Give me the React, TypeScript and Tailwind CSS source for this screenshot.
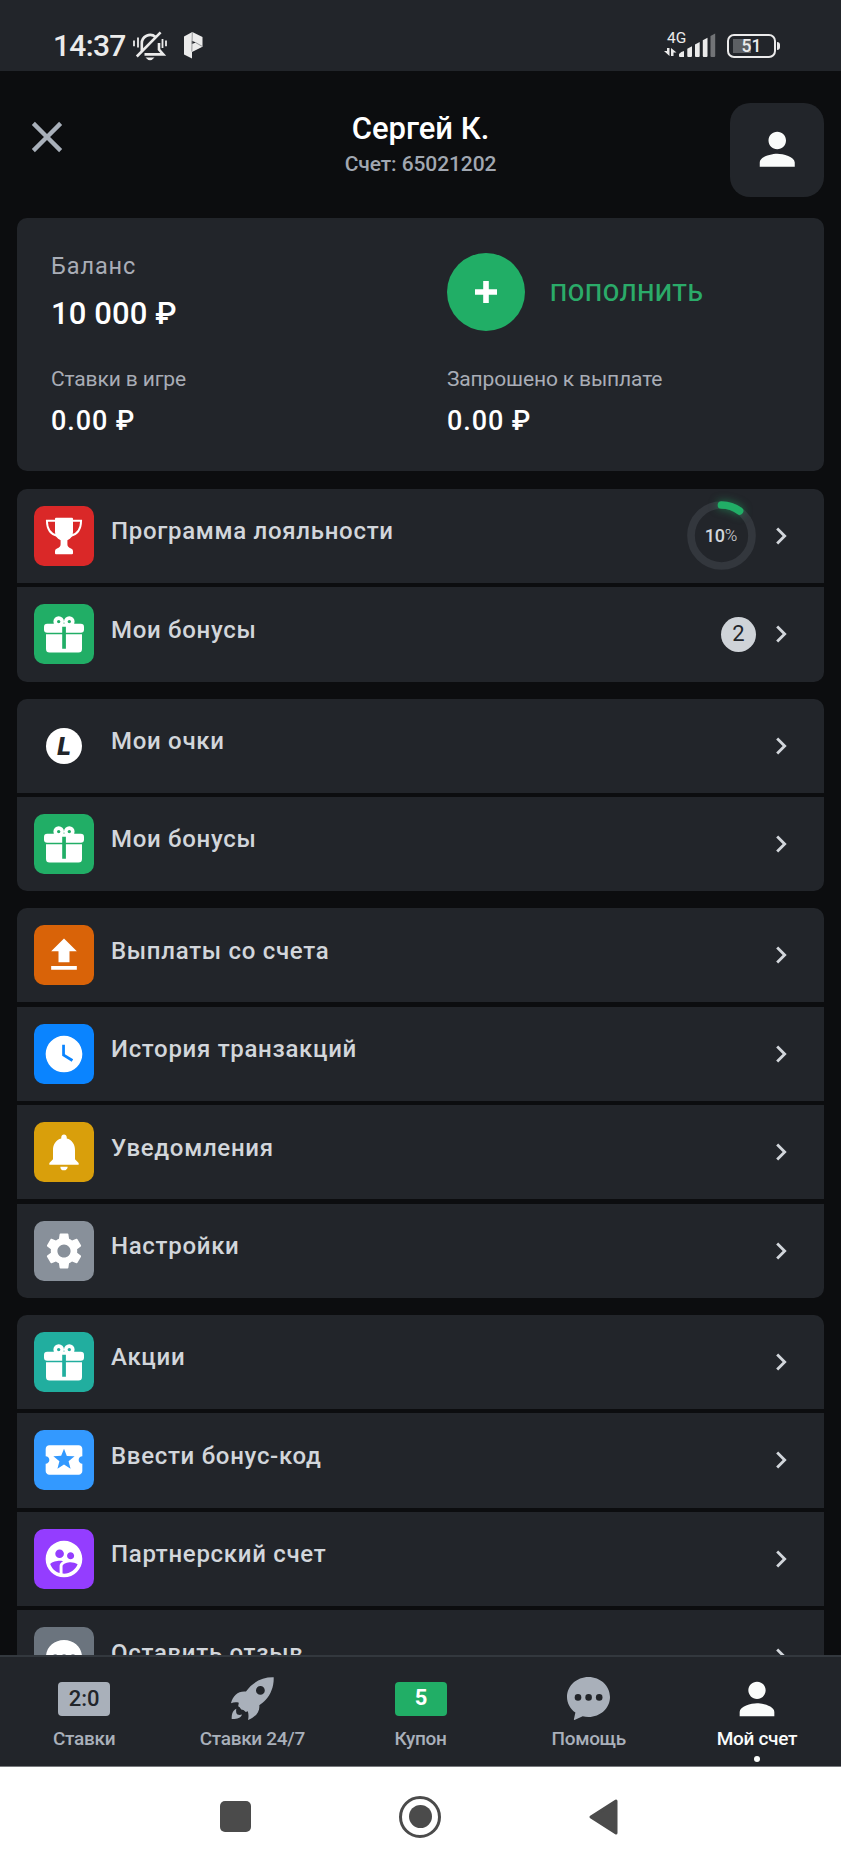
import React from "react";
import {
  MdChevronRight,
  MdClose,
  MdFileUpload,
  MdLocalActivity,
  MdNotifications,
  MdPerson,
  MdSettings,
  MdSupervisedUserCircle,
  MdWatchLater,
} from "react-icons/md";
import { clsx } from "clsx";

type MenuItem = {
  label: string;
  tile: string;
  icon: React.ReactNode;
  extra?: React.ReactNode;
};

const TrophyIcon = () => (
  <svg viewBox="0 0 60 60" className="size-[60px]" fill="#fff">
    <path d="M22 11.7h16q1 0 1 1V26q0 5.5-5.6 8.3v4q0 3 3.6 4.2 2 .8 2 2.500V47.200q0 1-1 1H22q-1 0-1-1V45q0-1.700 2-2.500 3.600-1.200 3.600-4.200v-4Q21 31.500 21 26V12.700q0-1 1-1Z" />
    <path
      d="M21.500 14.800H12.900C13 23 16.500 28.500 23.500 30M38.500 14.800h8.600C47 23 43.500 28.500 36.500 30"
      fill="none"
      stroke="#fff"
      strokeWidth="1.900"
    />
  </svg>
);

const GiftIcon = () => (
  <svg viewBox="0 0 60 60" className="size-[60px]">
    <g fill="none" stroke="#fff" strokeWidth="3.600">
      <circle cx="24.700" cy="17.600" r="3.500" />
      <circle cx="35.300" cy="17.600" r="3.500" />
    </g>
    <path
      fill="#fff"
      fillRule="evenodd"
      d="M13.200 19.700h33.600q3.200 0 3.200 3.200v2.600q0 3.200-3.200 3.200H31.900v-6h-3.700v6h-15Q10 28.700 10 25.500v-2.600q0-3.200 3.200-3.200ZM12 30.200h16.200v14.500h3.700V30.200H48V45q0 3.500-3.500 3.500h-29Q12 48.500 12 45Z"
    />
  </svg>
);

const PointsIcon = () => (
  <span className="flex size-9 items-center justify-center rounded-full bg-white text-[26px] leading-none font-black text-[#22252a] italic">
    L
  </span>
);

const ChatIcon = ({ className, dots }: { className?: string; dots: string }) => (
  <svg viewBox="0 0 43 43" className={className}>
    <path
      fill="currentColor"
      d="M21.500 0C33.400 0 43 8.900 43 20S33.400 40 21.500 40q-3 0-5.800-.8L7.500 42.900q-.8.200-.6-.6L8.400 35.600C3.300 32 0 26.300 0 20 0 8.900 9.600 0 21.500 0Z"
    />
    <g fill={dots}>
      <circle cx="11" cy="20.400" r="3.300" />
      <circle cx="21.600" cy="20.400" r="3.300" />
      <circle cx="32.200" cy="20.400" r="3.300" />
    </g>
  </svg>
);

const RocketIcon = () => (
  <svg viewBox="0 0 43 43" className="size-[43px]" fill="currentColor">
    <path
      fillRule="evenodd"
      d="M42.700.3C43 9 40 17 35 22.500 32.700 25 30.500 26.500 28.300 28.300c.8 6.200-4 12.200-11.300 14.700.8-3 .6-6-.2-8.700l-2 .7-2.300-2-2.300-.6-1.500-2.200-1.500-1 .6-3.400C5.500 25 2.500 25.200 0 26.300 1.700 18.500 7.500 13.600 15 14.500 22 4.500 32 0 42.700.3ZM29.400 9a4.400 4.400 0 1 0 0 8.800 4.400 4.400 0 0 0 0-8.800Z"
    />
    <path d="M5.300 31.700C1.500 33.500.7 37 .7 42c5 .2 9-.7 10.300-4.500-2.700 1-5.200.2-5.700-1.800-.3-1.400-.3-2.600 0-4Z" />
  </svg>
);

const LoyaltyRing = () => (
  <div className="relative flex size-[69px] items-center justify-center">
    <svg viewBox="0 0 69 69" className="absolute inset-0 overflow-visible" fill="none" strokeWidth="7.700">
      <circle cx="34.500" cy="34.500" r="30.500" stroke="#33373d" />
      <path
        d="M34.500 4a30.500 30.500 0 0 1 18 5.900"
        stroke="#21ae66"
        strokeLinecap="round"
        className="drop-shadow-[0_0_4px_#21ae6699]"
      />
    </svg>
    <span className="flex items-start pr-px text-[18px] leading-[22px] font-medium tracking-[-0.2px] text-[#d2d6db]">
      10
      <span className="-mt-px text-[17px] font-light">%</span>
    </span>
  </div>
);

const CountBadge = ({ value }: { value: number }) => (
  <span className="flex size-[35px] items-center justify-center rounded-full bg-[#cfd3d8] pb-px text-[22px] leading-none text-[#22252a]">
    {value}
  </span>
);

const glyph = "size-11 text-white";

const groups: MenuItem[][] = [
  [
    { label: "Программа лояльности", tile: "bg-[#da2828]", icon: <TrophyIcon />, extra: <LoyaltyRing /> },
    { label: "Мои бонусы", tile: "bg-[#21ae66]", icon: <GiftIcon />, extra: <CountBadge value={2} /> },
  ],
  [
    { label: "Мои очки", tile: "", icon: <PointsIcon /> },
    { label: "Мои бонусы", tile: "bg-[#21ae66]", icon: <GiftIcon /> },
  ],
  [
    { label: "Выплаты со счета", tile: "bg-[#d96308]", icon: <MdFileUpload className={glyph} /> },
    { label: "История транзакций", tile: "bg-[#0a84ff]", icon: <MdWatchLater className={glyph} /> },
    { label: "Уведомления", tile: "bg-[#d99f0b]", icon: <MdNotifications className={glyph} /> },
    { label: "Настройки", tile: "bg-[#88909a]", icon: <MdSettings className={glyph} /> },
  ],
  [
    { label: "Акции", tile: "bg-[#21ae9f]", icon: <GiftIcon /> },
    { label: "Ввести бонус-код", tile: "bg-[#3399ff]", icon: <MdLocalActivity className={glyph} /> },
    { label: "Партнерский счет", tile: "bg-[#943dff]", icon: <MdSupervisedUserCircle className={glyph} /> },
    {
      label: "Оставить отзыв",
      tile: "bg-[#6b747e]",
      icon: <ChatIcon className="mt-0.5 size-9 text-white" dots="#6b747e" />,
    },
  ],
];

const StatusBar = () => (
  <div className="flex h-[70.500px] shrink-0 items-start bg-[#22252a] pt-[28px] pl-[53px] text-[#ebebeb]">
    <span className="w-[80px] text-[30px] leading-9 font-medium tracking-[-0.7px]">14:37</span>
    <svg viewBox="0 0 34 30" className="mt-[3px] h-[30px] w-[34px]" fill="none" stroke="currentColor" strokeWidth="2.600">
      <path d="M8.800 20V12.500a8.400 8.400 0 0 1 13.800-6.600M11.500 23.400H30.300L26 18.600V12M3.800 25.500 27.600 1.300" />
      <path d="M1 9.500v5.800M5 6.500v10M29.500 8v9M33 9.500v5.800" strokeWidth="1.800" />
      <path d="M12.500 26.600h9q-4.500 5.400-9 0Z" fill="currentColor" stroke="none" />
    </svg>
    <svg viewBox="0 0 19 27" className="mt-1 ml-[17px] h-[27px] w-[19px]" fill="currentColor">
      <path d="M0 4.500 8.300 0 18.500 5v9.700L8 20v6.400L0 22.500Z" />
      <path d="M7.800 8.800 12 10.500 7.800 12Z" fill="#22252a" />
      <path d="M8.300 0 7.800 19.500M11.500 10.500l7 4" fill="none" stroke="#8b8d90" strokeWidth=".9" />
    </svg>
    <div className="mt-[3px] ml-[461px] w-[54px]">
      <div className="pl-[3px] text-[15.500px] leading-[14px]">4G</div>
      <svg viewBox="0 0 54 30" className="-mt-[15px] h-[30px] w-[54px]" fill="currentColor">
        <path d="M3 18h2.500v8L0 21h3ZM7 18l5.500 4.500H9.500V26H7Z" />
        <path d="M15 24q2-2.500 5-3v6h-4q-1 0-1-1ZM23.300 18.800l4.700-2.600V26q0 1-1 1h-2.700q-1 0-1-1ZM31 14.500l4.700-2.600V26q0 1-1 1H32q-1 0-1-1ZM38.800 10.300l4.700-2.600V26q0 1-1 1h-2.700q-1 0-1-1Z" />
        <path d="M46.500 6.100l4.700-2.600V26q0 1-1 1h-2.700q-1 0-1-1Z" opacity=".4" />
      </svg>
    </div>
    <div className="mt-[6px] ml-[9px] flex items-center gap-px">
      <div className="flex h-[23.500px] w-[49px] items-center justify-center rounded-[7px] border-2 border-current bg-[linear-gradient(#5d6064,#5d6064)] bg-[length:18px_14px] bg-[position:4px_center] bg-no-repeat pt-px text-[17.500px] leading-none font-medium">
        51
      </div>
      <div className="h-[8px] w-[3px] rounded-r-full bg-current" />
    </div>
  </div>
);

const Header = () => (
  <header className="flex h-[147.600px] shrink-0 justify-between px-[17px] pt-8">
    <button className="flex h-[69px] w-[94px] items-center pl-1">
      <MdClose className="size-[52px] text-[#a9b0ba]" />
    </button>
    <div className="pt-2 text-center">
      <h1 className="text-[31px] leading-9 font-medium text-white">Сергей К.</h1>
      <p className="mt-[4.500px] text-[21px] leading-[26px] font-medium tracking-[-0.1px] text-[#a1a7b1]">
        Счет: 65021202
      </p>
    </div>
    <button className="flex size-[94px] items-center justify-center rounded-[20px] bg-[#22252a]">
      <MdPerson className="size-[52.500px] text-[#f9fbfa]" />
    </button>
  </header>
);

const Stat = ({ label, value }: { label: string; value: string }) => (
  <div>
    <div className="text-[21px] leading-7 tracking-[-0.14px] text-[#a9adb6]">{label}</div>
    <div className="mt-[11.500px] text-[27px] leading-8 font-medium tracking-[0.9px] text-white">{value}</div>
  </div>
);

const BalanceCard = () => (
  <section className="mb-[0.8px] grid h-[253px] shrink-0 grid-cols-[396px_1fr] content-start rounded-[10px] bg-[#22252a] pt-[34px] pl-[34px]">
    <div className="h-[113px]">
      <div className="text-[23.500px] leading-7 tracking-[0.9px] text-[#a9adb6]">Баланс</div>
      <div className="mt-[13.600px] text-[31px] leading-10 font-medium tracking-[0.1px] text-white">10 000 ₽</div>
    </div>
    <button className="mt-[0.700px] flex h-[78px] items-center gap-[25.500px]">
      <span className="flex size-[77.500px] items-center justify-center rounded-full bg-[#21ae66]">
        <svg viewBox="0 0 22 22" className="size-[22px]" stroke="#fff" strokeWidth="5.600">
          <path d="M11 0v22M0 11h22" />
        </svg>
      </span>
      <span className="pt-0.5 text-[24px] leading-7 font-medium tracking-[0.7px] text-[#2bab69]">ПОПОЛНИТЬ</span>
    </button>
    <Stat label="Ставки в игре" value="0.00 ₽" />
    <Stat label="Запрошено к выплате" value="0.00 ₽" />
  </section>
);

const MenuRow = ({ label, tile, icon, extra }: MenuItem) => (
  <li className="flex h-[94.200px] shrink-0 items-center bg-[#22252a] pr-[26px] pl-[17px]">
    <span className={clsx("flex size-[60px] items-center justify-center rounded-[10px]", tile)}>{icon}</span>
    <span className="mb-[9.500px] ml-[17px] flex-1 text-[24px] leading-7 font-medium tracking-[0.7px] text-[#d2d6db]">
      {label}
    </span>
    {extra}
    <MdChevronRight className="ml-2 size-[34px] text-[#d2d6db]" />
  </li>
);

const tabs = [
  {
    label: "Ставки",
    icon: (
      <span className="flex h-[34px] w-[52px] items-center justify-center rounded bg-[#a9b0ba] text-[22px] leading-none font-medium text-[#22252a]">
        2:0
      </span>
    ),
  },
  { label: "Ставки 24/7", icon: <RocketIcon /> },
  {
    label: "Купон",
    icon: (
      <span className="ml-px flex h-[34px] w-[52px] items-center justify-center rounded bg-[#21ae66] pb-0.5 text-[22px] leading-none font-bold text-white">
        5
      </span>
    ),
  },
  { label: "Помощь", icon: <ChatIcon className="size-[43px]" dots="#22252a" /> },
  { label: "Мой счет", icon: <MdPerson className="size-[52px] shrink-0" />, active: true },
];

const TabBar = () => (
  <nav className="grid h-[111px] shrink-0 grid-cols-5 border-t-2 border-[#33383e] bg-[#22252a] pt-5">
    {tabs.map((tab) => (
      <button
        key={tab.label}
        className={clsx("flex flex-col items-center", tab.active ? "text-[#fafcfb]" : "text-[#a9b0ba]")}
      >
        <span className="flex h-[43px] items-center justify-center">{tab.icon}</span>
        <span className="mt-[6.500px] text-[19px] leading-6 font-medium tracking-[-0.3px]">{tab.label}</span>
        {tab.active && <span className="mt-[5px] size-[6.500px] rounded-full bg-current" />}
      </button>
    ))}
  </nav>
);

const SystemNav = () => (
  <div className="flex h-[102px] shrink-0 items-center gap-[148px] border-t border-[#77797c] bg-white pb-0.5 pl-[220px]">
    <div className="size-[31px] rounded-[5px] bg-[#4b4b4b]" />
    <div className="flex size-[42px] items-center justify-center rounded-full border-[3.5px] border-[#4b4b4b]">
      <div className="size-[23px] rounded-full bg-[#4b4b4b]" />
    </div>
    <svg viewBox="0 0 29 36" className="h-9 w-[29px]" fill="#4b4b4b" stroke="#4b4b4b" strokeWidth="3" strokeLinejoin="round">
      <path d="M27 2v32L2 18Z" />
    </svg>
  </div>
);

export default function App() {
  return (
    <div className="flex h-[1868px] w-[841px] flex-col overflow-hidden bg-[#0c0d0f] font-['Roboto',sans-serif]">
      <StatusBar />
      <Header />
      <main className="flex min-h-0 flex-1 flex-col gap-[17px] overflow-hidden px-[17px]">
        <BalanceCard />
        {groups.map((items, i) => (
          <ul key={i} className="flex shrink-0 flex-col gap-[4.300px] overflow-hidden rounded-[10px]">
            {items.map((item) => (
              <MenuRow key={item.label} {...item} />
            ))}
          </ul>
        ))}
      </main>
      <TabBar />
      <SystemNav />
    </div>
  );
}
